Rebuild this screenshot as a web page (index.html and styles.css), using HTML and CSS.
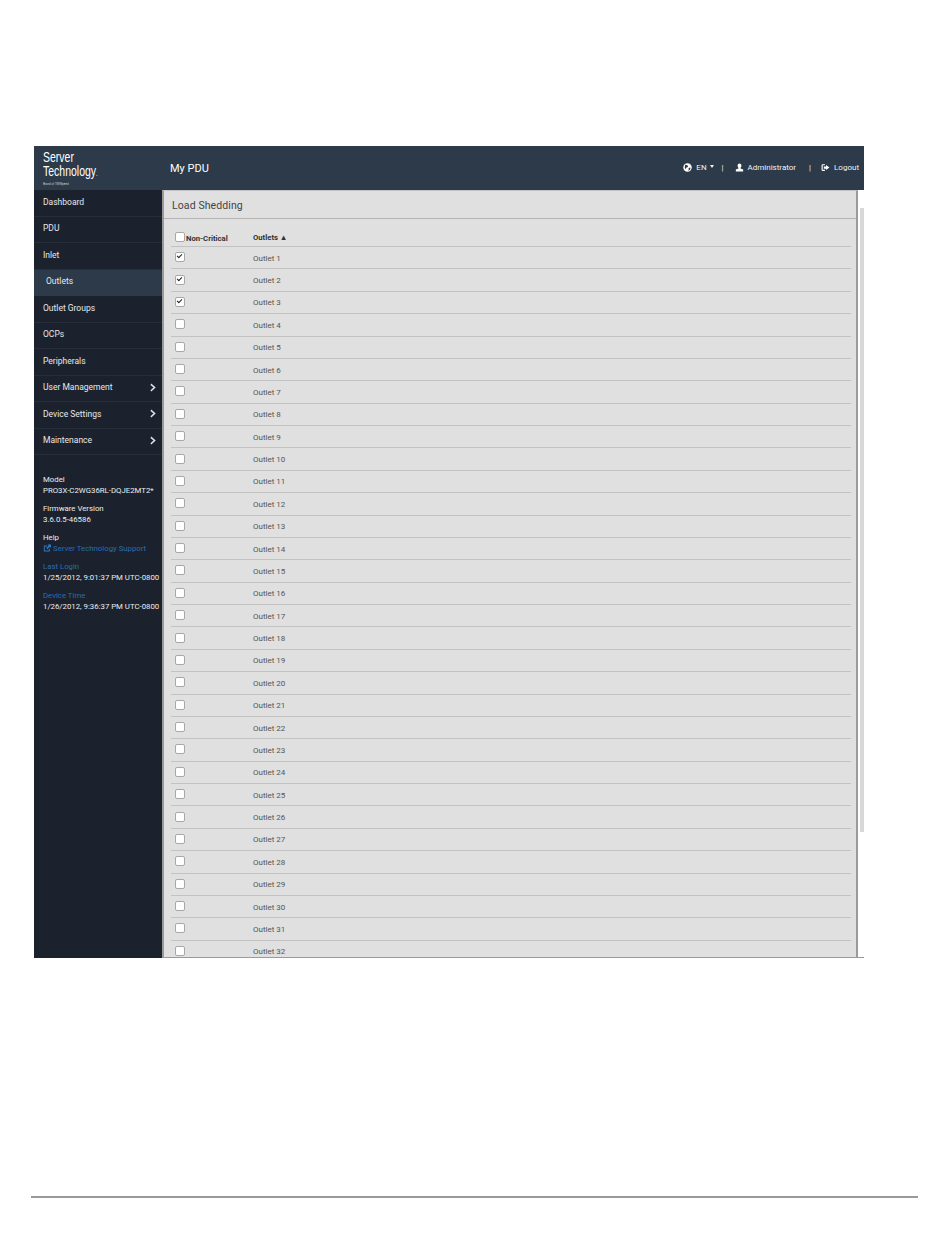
FILE: index.html
```html
<!DOCTYPE html>
<html>
	<head>
		<meta charset="utf-8">
		<title>My PDU - Load Shedding</title>
		<link rel="stylesheet" href="styles.css">
	</head>
	<body>
		<section class="screen">
			<header class="topbar">
				<div class="logo">
					<div class="logo-name">Server<br>Technology<span class="logo-dot">.</span></div>
					<div class="logo-sub">Brand of TMWpeed</div>
				</div>
				<div class="title">My PDU</div>
				<div class="top-links">
					<svg class="ico" viewBox="0 0 16 16"><circle cx="8" cy="8" r="7.5" fill="#fff"/><path d="M4 3l4 1 1 3-3 1-1 3-2-3zM10 9l3-1 0 3-3 3z" fill="#2c3a49"/></svg>
					<span class="lang">EN</span><i class="caret"></i>
					<span class="sep sep-lang">|</span>
					<svg class="ico" viewBox="0 0 16 16"><path d="M8 1c2.200 0 3.400 1.800 3.400 3.800 0 1.500-.7 2.900-1.500 3.600v1.200l4.600 2.100V15h-13v-3.300l4.600-2.100V8.400C5.300 7.700 4.600 6.300 4.600 4.800 4.600 2.800 5.800 1 8 1z" fill="#fff"/></svg>
					<span class="admin">Administrator</span>
					<span class="sep sep-admin">|</span>
					<svg class="ico" viewBox="0 0 16 16"><path d="M7 2H2.500L1 3.500v9L2.500 14H7v-2H3V4h4z" fill="#fff"/><path d="M9 3.500L15 8l-6 4.500V10H5V6h4z" fill="#fff"/></svg>
					<span>Logout</span>
				</div>
			</header>
			<div class="main">
				<aside class="sidebar">
					<nav class="menu">
						<a href="javascript:;">Dashboard</a>
						<a href="javascript:;">PDU</a>
						<a href="javascript:;">Inlet</a>
						<a href="javascript:;" class="active">Outlets</a>
						<a href="javascript:;">Outlet Groups</a>
						<a href="javascript:;">OCPs</a>
						<a href="javascript:;">Peripherals</a>
						<a href="javascript:;">User Management<svg class="chev" viewBox="0 0 8 10"><path d="M1.500 0.500L6.500 5l-5 4.500L0.500 8 4 5 0.500 2z" fill="#dfe3e8"/></svg></a>
						<a href="javascript:;">Device Settings<svg class="chev" viewBox="0 0 8 10"><path d="M1.500 0.500L6.500 5l-5 4.500L0.500 8 4 5 0.500 2z" fill="#dfe3e8"/></svg></a>
						<a href="javascript:;">Maintenance<svg class="chev" viewBox="0 0 8 10"><path d="M1.500 0.500L6.500 5l-5 4.500L0.500 8 4 5 0.500 2z" fill="#dfe3e8"/></svg></a>
					</nav>
					<div class="info">
						<div class="info-item">Model<br>PRO3X-C2WG36RL-DQJE2MT2*</div>
						<div class="info-item">Firmware Version<br>3.6.0.5-46586</div>
						<div class="info-item">Help<br><span class="blue"><svg class="ext" viewBox="0 0 10 10"><path d="M1 2h4v1.200H2.200v5h5V6H8.500v3.500H1zM5.500 0.500H10V5L8.500 3.500 5.500 6.500 4 5l3-3z" fill="#2f78c2"/></svg>Server Technology Support</span></div>
						<div class="info-item"><span class="blue">Last Login</span><br>1/25/2012, 9:01:37 PM UTC-0800</div>
						<div class="info-item"><span class="blue">Device Time</span><br>1/26/2012, 9:36:37 PM UTC-0800</div>
					</div>
				</aside>
				<section class="content">
					<h1 class="page-title">Load Shedding</h1>
					<div class="table" id="table">
						<div class="row head">
							<div class="col-check"><i class="box box-head"></i><span>Non-Critical</span></div>
							<div>Outlets ▲</div>
						</div>
					</div>
				</section>
				<div class="scrollbar"><div class="thumb"></div></div>
			</div>
		</section>
		<hr class="page-line">
		<script type="text/javascript">
			var table = document.getElementById("table");
			for (var i = 1; i <= 32; i++) {
				var row = document.createElement("div");
				row.className = "row";
				var box = i <= 3 ? '<i class="box checked"></i>' : '<i class="box"></i>';
				row.innerHTML = '<div class="col-check">' + box + '</div><div>Outlet ' + i + '</div>';
				table.appendChild(row);
			}
		</script>
	</body>
</html>
```

FILE: styles.css
```css
body {
	margin: 0;
	background: #fff;
	font-family: Roboto, "Liberation Sans", sans-serif;
}

.screen {
	width: 830px;
	height: 812px;
	margin: 146px 0 0 34px;
	overflow: hidden;
}

.topbar {
	height: 44px;
	background: #2c3a49;
	display: flex;
	align-items: center;
	color: #fff;
}

.logo {
	width: 136px;
	padding-left: 9px;
	box-sizing: border-box;
}

.logo-name {
	font-family: "Liberation Sans", sans-serif;
	font-size: 14px;
	line-height: 14px;
	transform: scaleX(0.75);
	transform-origin: left;
	white-space: nowrap;
}

.logo-dot {
	font-size: 8px;
}

.logo-sub {
	font-size: 3px;
	line-height: 5px;
	margin-top: 1px;
	color: #c8ced6;
}

.title {
	font-size: 11px;
	flex: 1;
}

.top-links {
	display: flex;
	align-items: center;
	font-size: 8px;
	color: #f0f2f4;
	margin-right: 5px;
	padding-bottom: 1px;
}

.ico {
	width: 9px;
	height: 9px;
	margin-right: 4px;
}

.caret {
	width: 0;
	height: 0;
	margin-left: 3px;
	margin-bottom: 2px;
	border-left: 2.5px solid transparent;
	border-right: 2.5px solid transparent;
	border-top: 3px solid #f0f2f4;
}

.sep-lang {
	margin: 0 11px 0 8px;
}

.sep-admin {
	margin: 0 10px 0 13px;
}

.main {
	height: 768px;
	display: flex;
}

.sidebar {
	width: 128px;
	background: #1b222d;
	color: #eceef0;
	font-size: 8.5px;
	flex-shrink: 0;
}

.menu a {
	height: 26.5px;
	box-sizing: border-box;
	padding: 0 5px 2px 9px;
	display: flex;
	align-items: center;
	justify-content: space-between;
	color: #e6e8eb;
	text-decoration: none;
	border-bottom: 1px solid #262e3a;
}

.menu a.active {
	background: #2c3a49;
	padding-left: 12px;
	border-bottom-color: #2c3a49;
}

.chev {
	width: 7px;
	height: 9px;
}

.info {
	padding-top: 19px;
	padding-left: 9px;
	font-size: 7.8px;
	line-height: 11px;
	white-space: nowrap;
	overflow: hidden;
}

.info-item {
	margin-bottom: 7px;
}

.blue {
	color: #2a6db0;
}

.ext {
	width: 8px;
	height: 8px;
	margin-right: 2px;
	vertical-align: -1px;
}

.content {
	flex: 1;
	min-width: 0;
	box-sizing: border-box;
	overflow: hidden;
	background: #e0e0e0;
	border-left: 2px solid #9a9a9a;
	border-right: 2px solid #9a9a9a;
	border-top: 1px solid #c4c4c4;
	border-bottom: 1px solid #9a9a9a;
	padding: 0 5px 0 7px;
	color: #3a3a3a;
}

.page-title {
	margin: 0 -5px 0 -7px;
	padding-left: 8px;
	height: 28px;
	line-height: 30px;
	box-sizing: border-box;
	font-size: 10.5px;
	font-weight: 400;
	letter-spacing: 0.1px;
	color: #444;
	border-bottom: 1px solid #b4b4b4;
}

.row {
	height: 22.39px;
	box-sizing: border-box;
	display: flex;
	align-items: center;
	border-bottom: 1px solid #c2c2c2;
	font-size: 8px;
	color: #555;
	padding-top: 1px;
}

.row.head {
	height: 28px;
	font-size: 7.7px;
	font-weight: 700;
	color: #333;
	padding-top: 9px;
}

.col-check {
	width: 82px;
	padding-left: 4px;
	box-sizing: border-box;
	display: flex;
	align-items: center;
	flex-shrink: 0;
}

.col-check span {
	margin-top: 3px;
	margin-left: 1px;
}

.box {
	width: 8px;
	height: 8px;
	background: #fff;
	border: 1px solid #a8a8a8;
	border-radius: 2px;
	display: block;
	position: relative;
	margin-bottom: 2px;
}

.box-head {
	margin-bottom: 1px;
}

.checked::after {
	content: "";
	position: absolute;
	left: 1px;
	top: 1px;
	width: 4px;
	height: 2px;
	border-left: 1.500px solid #222;
	border-bottom: 1.500px solid #222;
	transform: rotate(-45deg);
}

.scrollbar {
	width: 6px;
	box-sizing: border-box;
	background: #fff;
	padding: 18px 0 0 2px;
	border-bottom: 1px solid #9a9a9a;
	flex-shrink: 0;
}

.thumb {
	height: 624px;
	background: #d8d8d8;
}

.page-line {
	height: 2px;
	border: 0;
	background: #999;
	margin: 238px 32px 0 31px;
}
```
